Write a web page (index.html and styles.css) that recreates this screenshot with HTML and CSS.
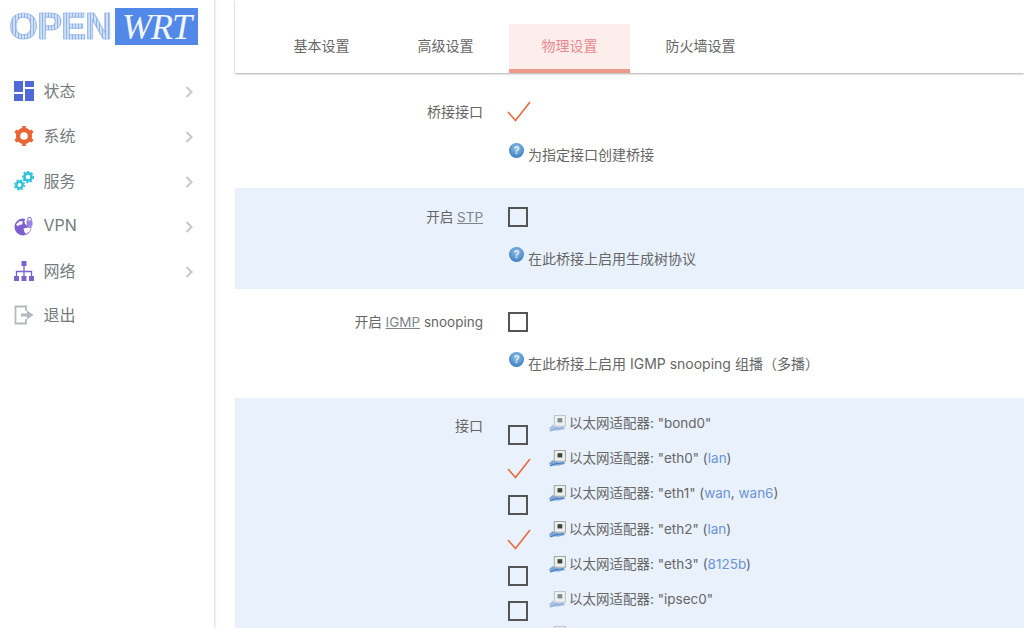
FILE: index.html
```html
<!DOCTYPE html>
<html lang="zh">
<head>
<meta charset="utf-8">
<title>OpenWrt</title>
<link rel="stylesheet" href="styles.css">
</head>
<body>
<div class="app">
  <aside class="sidebar">
    <div class="logo"><span class="logo-open">OPEN</span><span class="logo-wrt">WRT</span></div>
    <nav class="menu">
      <a class="menu-item"><svg class="menu-icon" viewBox="0 0 20 20"><path fill="#4f69d6" d="M0 0h9v11H0zM11 0h9v6h-9zM0 13h9v7H0zM11 8h9v12h-9z"/></svg><span class="menu-text">状态</span><svg class="chevron" viewBox="0 0 8 12"><path d="M1.5 1l5 5-5 5" fill="none" stroke="#c4c7cb" stroke-width="2"/></svg></a>
      <a class="menu-item"><svg class="menu-icon" viewBox="0 0 20 20"><circle cx="10" cy="10" r="6" fill="none" stroke="#ea6436" stroke-width="4.4"/><path stroke="#ea6436" stroke-width="3.6" d="M10 0v4M10 16v4M1.3 5l3.500 2M15.200 13l3.500 2M1.300 15l3.500-2M15.200 7l3.500-2"/></svg><span class="menu-text">系统</span><svg class="chevron" viewBox="0 0 8 12"><path d="M1.5 1l5 5-5 5" fill="none" stroke="#c4c7cb" stroke-width="2"/></svg></a>
      <a class="menu-item"><svg class="menu-icon" viewBox="0 0 20 20"><circle cx="14" cy="6" r="3.6" fill="none" stroke="#2dc3dc" stroke-width="2.6"/><circle cx="14" cy="6" r="5.4" fill="none" stroke="#2dc3dc" stroke-width="1.6" stroke-dasharray="2 2"/><circle cx="5.500" cy="14" r="3.200" fill="none" stroke="#2dc3dc" stroke-width="2.4"/><circle cx="5.500" cy="14" r="4.800" fill="none" stroke="#2dc3dc" stroke-width="1.5" stroke-dasharray="2 1.8"/></svg><span class="menu-text">服务</span><svg class="chevron" viewBox="0 0 8 12"><path d="M1.5 1l5 5-5 5" fill="none" stroke="#c4c7cb" stroke-width="2"/></svg></a>
      <a class="menu-item"><svg class="menu-icon" viewBox="0 0 20 20"><circle cx="9" cy="11" r="8.500" fill="#7e5fd0"/><path fill="#fff" d="M2 8.500l4-3.500 3 .5-1 3-3 .5-1 1.500zM9.500 12.500l4.500-1 3 .5-1.500 3.500-3.500 2.500-1.500-2z"/><circle cx="15.500" cy="5.500" r="5" fill="#fff"/><rect x="12.500" y="4.500" width="6" height="5.500" rx="1" fill="#9a82de"/><path fill="none" stroke="#9a82de" stroke-width="1.2" d="M13.800 5V3a1.700 1.700 0 0 1 3.400 0v2"/></svg><span class="menu-text">VPN</span><svg class="chevron" viewBox="0 0 8 12"><path d="M1.5 1l5 5-5 5" fill="none" stroke="#c4c7cb" stroke-width="2"/></svg></a>
      <a class="menu-item"><svg class="menu-icon" viewBox="0 0 20 20"><path fill="#7b62cf" d="M7.500 0h5v5h-5zM0 15h5v5H0zM7.500 15h5v5h-5zM15 15h5v5h-5z"/><path fill="none" stroke="#7b62cf" stroke-width="1.3" d="M10 5v10M2.500 15v-4.500h15V15"/></svg><span class="menu-text">网络</span><svg class="chevron" viewBox="0 0 8 12"><path d="M1.5 1l5 5-5 5" fill="none" stroke="#c4c7cb" stroke-width="2"/></svg></a>
      <a class="menu-item"><svg class="menu-icon" viewBox="0 0 20 20"><path fill="none" stroke="#b4b9c0" stroke-width="1.8" d="M12 6V1.500H1.500v17H12V14"/><path fill="#b4b9c0" d="M7 8.500h6V5.500l6.500 4.500-6.500 4.500v-3H7z"/></svg><span class="menu-text">退出</span></a>
    </nav>
  </aside>
  <main class="main">
    <div class="tabs">
      <a class="tab">基本设置</a>
      <a class="tab">高级设置</a>
      <a class="tab tab-active">物理设置</a>
      <a class="tab">防火墙设置</a>
    </div>
    <section class="row row-bridge">
      <div class="label">桥接接口</div>
      <div class="field">
        <span class="check"><svg viewBox="0 0 24 21"><path d="M1 11l7.500 8.500L23 1" fill="none" stroke="#ea6a3c" stroke-width="1.6"/></svg></span>
        <p class="help"><span class="help-icon">?</span>为指定接口创建桥接</p>
      </div>
    </section>
    <section class="row row-blue row-stp">
      <div class="label">开启 <abbr class="term">STP</abbr></div>
      <div class="field">
        <span class="box"></span>
        <p class="help"><span class="help-icon">?</span>在此桥接上启用生成树协议</p>
      </div>
    </section>
    <section class="row row-igmp">
      <div class="label">开启 <abbr class="term">IGMP</abbr> snooping</div>
      <div class="field">
        <span class="box"></span>
        <p class="help"><span class="help-icon">?</span>在此桥接上启用 IGMP snooping 组播（多播）</p>
      </div>
    </section>
    <section class="row row-blue row-ifaces">
      <div class="label">接口</div>
      <ul class="ifaces">
        <li class="iface"><span class="box"></span><svg class="nic nic-off" viewBox="0 0 16 16"><use href="#nic"/></svg><span>以太网适配器: "bond0"</span></li>
        <li class="iface"><span class="check"><svg viewBox="0 0 24 21"><path d="M1 11l7.500 8.500L23 1" fill="none" stroke="#ea6a3c" stroke-width="1.6"/></svg></span><svg class="nic" viewBox="0 0 16 16"><use href="#nic"/></svg><span>以太网适配器: "eth0" (<a class="zone">lan</a>)</span></li>
        <li class="iface"><span class="box"></span><svg class="nic" viewBox="0 0 16 16"><use href="#nic"/></svg><span>以太网适配器: "eth1" (<a class="zone">wan</a>, <a class="zone">wan6</a>)</span></li>
        <li class="iface"><span class="check"><svg viewBox="0 0 24 21"><path d="M1 11l7.500 8.500L23 1" fill="none" stroke="#ea6a3c" stroke-width="1.6"/></svg></span><svg class="nic" viewBox="0 0 16 16"><use href="#nic"/></svg><span>以太网适配器: "eth2" (<a class="zone">lan</a>)</span></li>
        <li class="iface"><span class="box"></span><svg class="nic" viewBox="0 0 16 16"><use href="#nic"/></svg><span>以太网适配器: "eth3" (<a class="zone">8125b</a>)</span></li>
        <li class="iface"><span class="box"></span><svg class="nic nic-off" viewBox="0 0 16 16"><use href="#nic"/></svg><span>以太网适配器: "ipsec0"</span></li>
        <li class="iface"><svg class="nic nic-off" viewBox="0 0 16 16"><use href="#nic"/></svg></li>
      </ul>
    </section>
  </main>
</div>
<svg class="defs" width="0" height="0"><defs><g id="nic"><path fill="#eef0ee" stroke="#a4a8a6" stroke-width="1" d="M5 .5h10.500v10H5z"/><path fill="#3b4636" d="M8 3h4.500v4H8z"/><path fill="#7ea6d8" d="M0 12.500l3.500-3 2 1.500 2-.5 1 1.500 5.500-.5 1.500 1.500-6 1.500H1z"/><path fill="none" stroke="#3f74b8" stroke-width="1" d="M1 15c3-.5 4-2 7-2.500s4-.5 6-.5"/></g></defs></svg>
</body>
</html>
```
FILE: styles.css
```css
* { box-sizing: border-box; }
html, body { margin: 0; height: 100%; overflow: hidden; }
body {
  background: #fff;
  color: #666;
  font-family: "Inter", "Noto Sans CJK SC", sans-serif;
  font-size: 13.5px;
}
.defs { position: absolute; }
.app { display: flex; height: 628px; }

.sidebar {
  width: 214px;
  flex: none;
  background: #fff;
  box-shadow: 1px 0 2px rgba(0, 0, 0, .16);
}
.logo {
  height: 69px;
  padding: 8px 0 0 9px;
  display: flex;
  align-items: flex-start;
  gap: 5px;
}
.logo-open {
  margin-top: 2px;
  width: 101px;
  font: 900 37px/34px "Liberation Sans", sans-serif;
  letter-spacing: -.6px;
  color: transparent;
  background: repeating-linear-gradient(90deg, #8fb2ea 0 1.5px, #d3e1f7 1.5px 3px);
  -webkit-background-clip: text;
  background-clip: text;
  -webkit-text-stroke: .7px #8fb2ea;
  white-space: nowrap;
}
.logo-wrt {
  width: 83px;
  height: 37px;
  background: #5289e8;
  color: #f2f6fd;
  font: italic 400 36px/38px "Liberation Serif", serif;
  text-align: center;
  letter-spacing: -1px;
}
.menu { display: flex; flex-direction: column; }
.menu-item {
  height: 44.8px;
  display: flex;
  align-items: center;
  padding-left: 14px;
}
.menu-icon { width: 20px; height: 20px; flex: none; }
.menu-text {
  margin-left: 9.500px;
  font-size: 16px;
  color: #767a7e;
  flex: 1;
  position: relative;
  top: -1px;
}
.chevron { width: 8px; height: 12px; flex: none; margin-right: 21px; position: relative; top: 1px; }

.main { flex: 1; margin-left: 21px; min-width: 0; }
.tabs {
  height: 73px;
  padding: 24px 0 0 26px;
  display: flex;
  gap: 3px;
  background: #fff;
  box-shadow: 0 1px 2px rgba(0, 0, 0, .32);
  position: relative;
}
.tab {
  padding: 0 32.5px;
  font-size: 14px;
  line-height: 43px;
  color: #666;
  height: 49px;
}
.tab-active {
  background: #fdeeec;
  color: #e58a8f;
  border-bottom: 4px solid #ee9a8a;
}

.row {
  display: grid;
  grid-template-columns: 248px 1fr;
  column-gap: 25px;
}
.row-blue { background: #e8f1fc; }
.row-bridge { height: 115px; padding-top: 28px; }
.row-stp { height: 101px; padding-top: 19px; }
.row-igmp { height: 109px; padding-top: 23px; }
.row-ifaces { height: 230px; padding-top: 10px; overflow: hidden; }
.label {
  text-align: right;
  font-size: 13.5px;
  line-height: 20px;
}
.row-bridge .label, .row-ifaces .label { font-size: 14px; }
.row-bridge .label { padding-top: 1px; }
.row-ifaces .label { padding-top: 8px; }
.term { text-decoration: underline; color: #80858a; }
.field { display: flex; flex-direction: column; align-items: flex-start; }
.box {
  display: block;
  width: 20px;
  height: 20px;
  border: 2px solid #555;
  flex: none;
}
.check { display: block; width: 24px; height: 21px; margin-left: -1px; flex: none; }
.check svg { display: block; width: 24px; height: 21px; }
.help {
  margin: 20px 0 0 1px;
  font-size: 14px;
  line-height: 24px;
  display: flex;
  align-items: flex-start;
}
.row-bridge .help { margin-top: 21px; }
.help-icon {
  width: 15px;
  height: 15px;
  margin: 0 4px 0 0;
  border-radius: 50%;
  background: radial-gradient(circle at 50% 35%, #8dc0ea, #3d7dbf 80%);
  color: #e8f2fb;
  font: 700 10px/15px "Liberation Sans", sans-serif;
  text-align: center;
}
.ifaces { list-style: none; margin: 0; padding: 0; }
.iface {
  position: relative;
  height: 35.2px;
  display: flex;
  align-items: flex-start;
  padding-left: 41px;
  line-height: 30px;
  white-space: nowrap;
}
.iface .box { position: absolute; left: 0; top: 17px; }
.iface .check { position: absolute; left: 0; top: 15px; }
.nic { width: 17px; height: 17px; margin: 7px 3px 0 0; flex: none; }
.nic-off { opacity: .6; }
.zone { color: #6d93d6; }
```
